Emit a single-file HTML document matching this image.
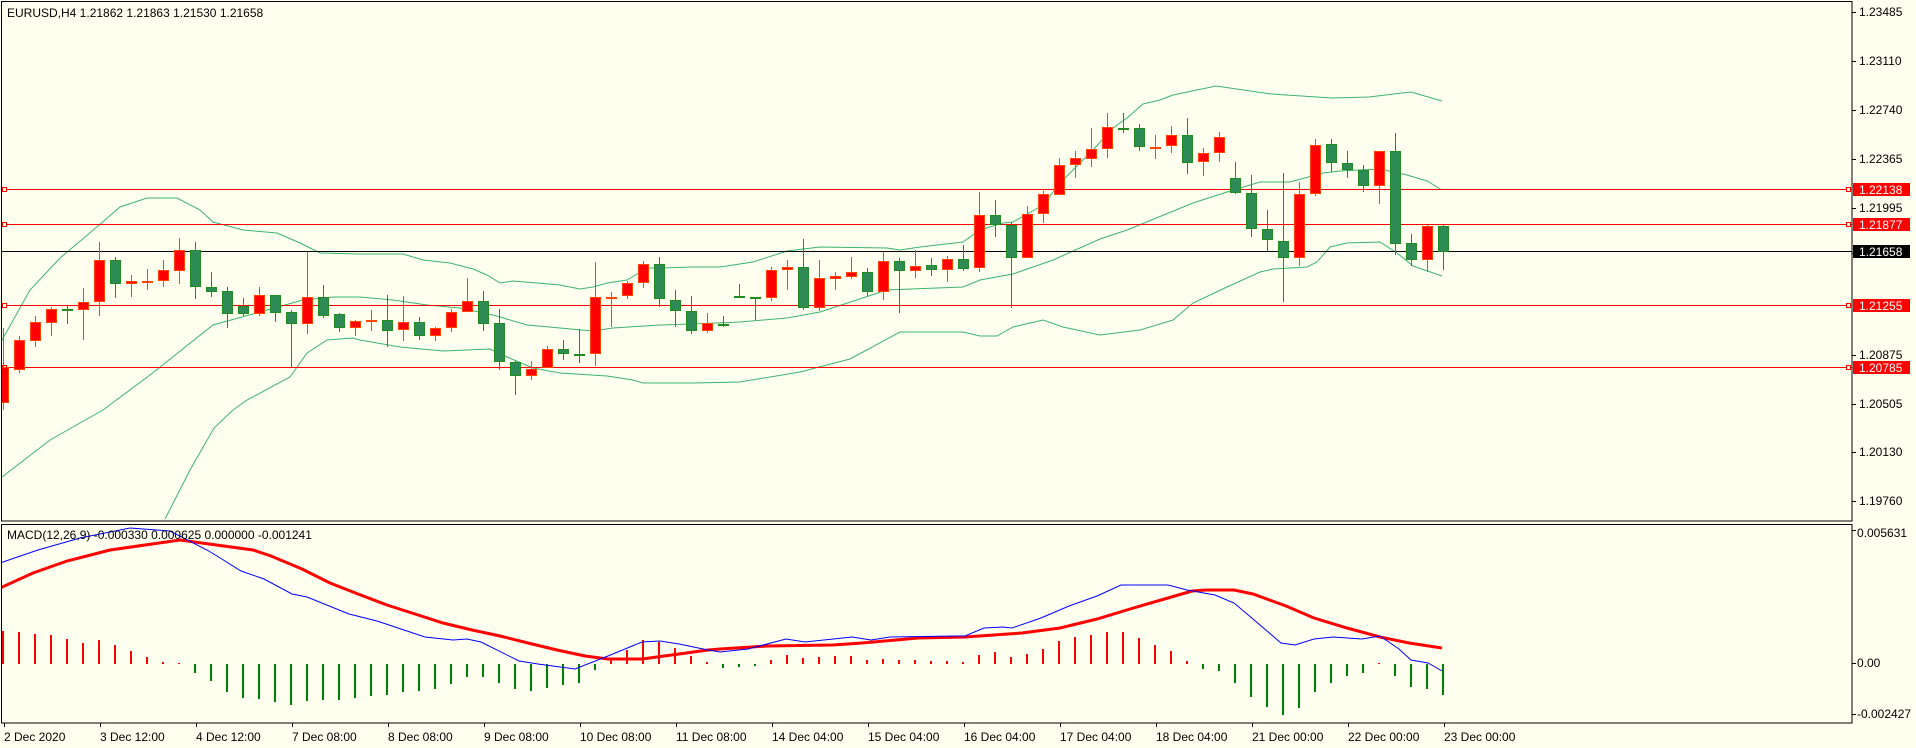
<!DOCTYPE html>
<html><head><meta charset="utf-8">
<style>
html,body{margin:0;padding:0;background:#fffff0;width:1916px;height:748px;overflow:hidden}
svg{display:block}
text{font-family:"Liberation Sans",Arial,sans-serif;font-size:12px;fill:#000}
</style></head>
<body>
<svg id="s" width="1916" height="748" viewBox="0 0 1916 748" xmlns="http://www.w3.org/2000/svg" shape-rendering="crispEdges">
<defs>
<clipPath id="cm"><rect x="2" y="2" width="1850" height="519"/></clipPath>
<clipPath id="cd"><rect x="2" y="525" width="1850" height="198"/></clipPath>
</defs>
<rect width="1916" height="748" fill="#fffff0"/>
<g id="main" clip-path="url(#cm)"></g>
<g id="macd" clip-path="url(#cd)"></g>
<!-- panel borders -->
<rect x="1.5" y="1.5" width="1850.5" height="519.5" fill="none" stroke="#000" stroke-width="1"/>
<rect x="1.5" y="524.5" width="1850.5" height="198.5" fill="none" stroke="#000" stroke-width="1"/>
<g id="ticks" stroke="#000"></g>
<text x="7" y="17">EURUSD,H4  1.21862 1.21863 1.21530 1.21658</text>
<text x="7" y="539" font-size="11">MACD(12,26,9) -0.000330 0.000625 0.000000 -0.001241</text>
<g id="plabels">
<text x="1859" y="16">1.23485</text>
<text x="1859" y="65">1.23110</text>
<text x="1859" y="114">1.22740</text>
<text x="1859" y="163">1.22365</text>
<text x="1859" y="212">1.21995</text>
<text x="1859" y="258">1.21620</text>
<text x="1859" y="359">1.20875</text>
<text x="1859" y="408">1.20505</text>
<text x="1859" y="456">1.20130</text>
<text x="1859" y="505">1.19760</text>
<text x="1857" y="537">0.005631</text>
<text x="1857" y="667">0.00</text>
<text x="1857" y="718">-0.002427</text>
</g>
<g id="boxes">
<rect x="1853" y="183" width="57" height="13" fill="#ff0000"/><text x="1859" y="194" style="fill:#fff">1.22138</text>
<rect x="1853" y="218" width="57" height="13" fill="#ff0000"/><text x="1859" y="229" style="fill:#fff">1.21877</text>
<rect x="1853" y="245" width="57" height="13" fill="#000"/><text x="1859" y="256" style="fill:#fff">1.21658</text>
<rect x="1853" y="299" width="57" height="13" fill="#ff0000"/><text x="1859" y="310" style="fill:#fff">1.21255</text>
<rect x="1853" y="361" width="57" height="13" fill="#ff0000"/><text x="1859" y="372" style="fill:#fff">1.20785</text>
</g>
<g id="tlabels">
<text x="4" y="741">2 Dec 2020</text>
<text x="100" y="741">3 Dec 12:00</text>
<text x="196" y="741">4 Dec 12:00</text>
<text x="292" y="741">7 Dec 08:00</text>
<text x="388" y="741">8 Dec 08:00</text>
<text x="484" y="741">9 Dec 08:00</text>
<text x="580" y="741">10 Dec 08:00</text>
<text x="676" y="741">11 Dec 08:00</text>
<text x="772" y="741">14 Dec 04:00</text>
<text x="868" y="741">15 Dec 04:00</text>
<text x="964" y="741">16 Dec 04:00</text>
<text x="1060" y="741">17 Dec 04:00</text>
<text x="1156" y="741">18 Dec 04:00</text>
<text x="1252" y="741">21 Dec 00:00</text>
<text x="1348" y="741">22 Dec 00:00</text>
<text x="1444" y="741">23 Dec 00:00</text>
</g>
</svg>
<script>
(function(){
var NS="http://www.w3.org/2000/svg";
function el(p,t,a){var e=document.createElementNS(NS,t);for(var k in a)e.setAttribute(k,a[k]);p.appendChild(e);return e;}
var main=document.getElementById("main"),macd=document.getElementById("macd"),ticks=document.getElementById("ticks");
function pts(a){var s=[];for(var i=0;i<a.length;i+=2)s.push(a[i]+","+a[i+1]);return s.join(" ");}
// Bollinger bands
var up=[2,340,30,290,60,258,98,226,120,207,147,198,177,198,200,210,213,222,243,230,277,233,300,243,320,253,360,254,403,254,423,260,450,263,473,269,487,275,500,283,513,281,537,283,560,285,580,289,593,287,607,283,627,280,647,268,660,268,693,267,720,267,753,262,787,251,820,247,887,248,900,250,920,247,963,242,980,230,1003,223,1013,222,1043,205,1060,183,1093,150,1113,128,1127,118,1143,104,1160,100,1173,95,1216,86,1271,94,1332,98,1369,97,1411,92,1442,101];
var mid=[2,477,50,440,103,410,150,375,213,325,267,310,303,300,333,297,360,297,393,300,427,305,460,308,493,315,527,325,560,328,593,331,613,328,660,325,693,324,740,322,787,318,820,312,887,290,963,287,980,280,1013,274,1053,260,1100,239,1127,230,1193,203,1227,192,1260,182,1290,182,1323,173,1340,171,1380,169,1407,175,1427,181,1442,190];
var lo=[165,519,190,470,214,428,233,410,247,400,290,377,307,353,327,340,353,338,360,340,400,347,443,351,490,349,507,357,533,368,560,373,607,376,633,380,643,383,693,383,740,382,800,372,850,359,900,332,963,332,980,336,997,336,1013,327,1043,320,1063,327,1100,335,1140,330,1173,320,1193,303,1227,287,1260,272,1273,269,1307,267,1317,262,1330,247,1347,243,1380,242,1397,253,1413,266,1442,276];
[up,mid,lo].forEach(function(a){el(main,"polyline",{points:pts(a),fill:"none",stroke:"#3cb371","stroke-width":1,"shape-rendering":"auto"});});
// horizontal lines
[189,224,305,367].forEach(function(y){
 el(main,"line",{x1:2,y1:y+0.5,x2:1852,y2:y+0.5,stroke:"#ff0000","stroke-width":1});
 el(main,"rect",{x:2.5,y:y-1.5,width:4,height:4,fill:"#fffff0",stroke:"#ff0000","stroke-width":1});
 el(main,"rect",{x:1846.5,y:y-1.5,width:4,height:4,fill:"#fffff0",stroke:"#ff0000","stroke-width":1});
});
el(main,"line",{x1:2,y1:251.5,x2:1852,y2:251.5,stroke:"#000","stroke-width":1});
// candles: top,bot,hi,lo,c
var C=[[367,403,328,410,1],[340,370,336,373,1],[322,341,316,347,1],[309,323,307,336,1],[309,309,306,324,0],[302,310,288,340,1],[260,302,242,316,1],[260,284,257,298,0],[281,284,275,297,1],[281,281,269,290,1],[270,281,260,287,1],[250,271,238,284,1],[250,287,242,299,0],[287,292,272,297,0],[291,314,287,328,0],[306,314,298,316,0],[295,314,287,316,1],[295,313,295,322,0],[312,324,310,368,0],[297,324,252,334,1],[297,316,285,318,0],[314,328,313,332,0],[321,328,320,336,1],[320,321,310,331,1],[320,331,295,347,0],[322,330,296,341,1],[322,336,317,340,0],[328,336,327,341,1],[312,328,309,332,1],[301,312,278,312,1],[301,324,291,331,0],[323,362,309,370,0],[362,376,361,395,0],[369,376,361,380,1],[349,368,346,368,1],[349,354,340,360,0],[354,354,329,363,0],[297,354,262,366,1],[297,297,292,327,1],[283,296,281,299,1],[264,283,261,288,1],[264,299,257,307,0],[300,311,290,327,0],[311,331,296,334,0],[323,331,313,333,1],[324,324,316,327,0],[296,296,284,297,0],[297,297,297,320,0],[270,298,267,301,1],[267,270,260,290,1],[267,308,239,310,0],[278,308,260,311,1],[276,279,272,290,1],[272,277,257,279,1],[272,292,268,296,0],[261,292,252,300,1],[261,271,258,313,0],[266,271,250,278,1],[265,270,258,276,0],[259,270,256,282,1],[259,269,245,271,0],[215,268,192,272,1],[215,225,200,237,0],[225,258,222,308,0],[214,258,206,258,1],[194,214,191,223,1],[165,195,158,195,1],[158,165,151,178,1],[149,159,128,167,1],[127,149,113,158,1],[128,128,113,133,0],[128,147,124,151,0],[147,147,135,159,1],[135,146,126,153,1],[135,163,118,174,0],[153,162,148,176,1],[137,153,132,162,1],[178,193,162,194,0],[193,229,175,237,0],[229,240,210,251,0],[241,258,173,302,0],[194,258,182,266,1],[145,194,139,196,1],[144,163,139,172,0],[163,170,151,178,0],[170,186,165,192,0],[151,186,151,204,1],[151,244,133,255,0],[243,260,234,266,0],[226,260,225,272,1],[226,252,225,270,0]];
C.forEach(function(c,i){
 var x=3+16*i, ln=c[4]?"#ff4500":"#228b22", fl=c[4]?"#ff0000":"#2e8b57";
 el(main,"rect",{x:x,y:c[2],width:1,height:Math.max(1,c[3]-c[2]),fill:ln});
 if(c[1]-c[0]<2){el(main,"rect",{x:x-5,y:c[0],width:11,height:2,fill:ln});}
 else{el(main,"rect",{x:x-5,y:c[0],width:11,height:c[1]-c[0],fill:ln});
      el(main,"rect",{x:x-4,y:c[0]+1,width:9,height:c[1]-c[0]-2,fill:fl});}
});
// MACD histogram
var H=[33,32,30,29,25,21,24,19,13,7,2,1,-9,-17,-28,-34,-35,-38,-41,-37,-36,-36,-34,-32,-31,-28,-27,-25,-20,-13,-13,-19,-25,-27,-24,-21,-19,-6,5,14,24,22,16,8,2,-4,-3,-2,4,9,6,7,8,8,4,5,4,4,3,3,2,9,12,7,10,15,23,27,29,32,32,26,19,13,3,-5,-7,-19,-33,-43,-51,-44,-28,-19,-12,-9,1,-12,-23,-25,-31];
H.forEach(function(h,i){var x=2+16*i;
 if(h>0)el(macd,"rect",{x:x,y:664-h,width:2,height:h,fill:"#ff0000"});
 else el(macd,"rect",{x:x,y:664,width:2,height:-h,fill:"#008000"});});
var blue=[0,563,38,550,80,538,130,528,170,531,207,550,217,556,241,571,264,579,292,594,307,597,349,614,377,621,401,629,425,637,453,640,467,639,481,642,519,661,538,664,575,669,608,656,642,642,660,641,679,644,708,650,720,652,748,649,786,639,805,642,852,637,871,640,890,637,956,636,965,636,984,628,1003,627,1012,628,1041,618,1069,606,1097,596,1121,585,1145,585,1168,585,1187,590,1215,595,1234,603,1253,619,1281,643,1295,645,1314,639,1333,637,1362,639,1380,636,1399,649,1411,660,1428,663,1442,671];
var red=[0,588,33,573,67,561,110,550,180,540,253,550,271,556,302,569,330,583,358,594,387,605,415,614,443,623,472,630,500,636,528,643,557,650,585,656,608,659,642,659,679,654,708,650,720,649,767,646,833,645,862,643,918,638,965,637,1022,633,1060,628,1097,619,1130,609,1168,598,1192,591,1206,590,1234,590,1253,594,1286,606,1314,618,1347,628,1380,637,1409,643,1442,648];
el(macd,"polyline",{points:pts(red),fill:"none",stroke:"#ff0000","stroke-width":3,"shape-rendering":"auto"});
el(macd,"polyline",{points:pts(blue),fill:"none",stroke:"#0000ff","stroke-width":1,"shape-rendering":"auto"});
// axis ticks
[12,61,110,159,208,253,355,404,452,501,530,663,714].forEach(function(y){el(ticks,"line",{x1:1852,y1:y+0.5,x2:1856,y2:y+0.5});});
for(var k=0;k<16;k++){var x=4+96*k;el(ticks,"line",{x1:x+0.5,y1:723,x2:x+0.5,y2:727});}
})();
</script>
</body></html>
